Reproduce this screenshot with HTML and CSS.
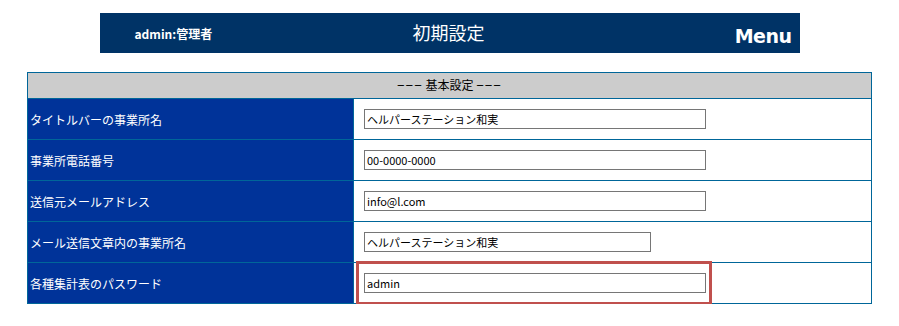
FILE: index.html
```html
<!DOCTYPE html>
<html lang="ja">
<head>
    <meta charset="UTF-8" />
    <title>初期設定</title>
    <link rel="stylesheet" href="styles.css">
</head>
<body>
    <div class="topbar">
        <span class="user">admin:管理者</span>
        <span class="title">初期設定</span>
        <span class="menu">Menu</span>
    </div>

    <table class="settings">
        <tr>
            <th colspan="2"><span class="dash">−−−</span> 基本設定 <span class="dash">−−−</span></th>
        </tr>
        <tr>
            <td class="label">タイトルバーの事業所名</td>
            <td class="field"><input type="text" class="wide" value="ヘルパーステーション和実" /></td>
        </tr>
        <tr>
            <td class="label">事業所電話番号</td>
            <td class="field"><input type="text" class="wide" value="00-0000-0000" /></td>
        </tr>
        <tr>
            <td class="label">送信元メールアドレス</td>
            <td class="field"><input type="text" class="wide" value="info@l.com" /></td>
        </tr>
        <tr>
            <td class="label">メール送信文章内の事業所名</td>
            <td class="field"><input type="text" class="mid" value="ヘルパーステーション和実" /></td>
        </tr>
        <tr>
            <td class="label">各種集計表のパスワード</td>
            <td class="field marked">
                <span class="highlight"></span>
                <input type="text" class="wide" value="admin" />
            </td>
        </tr>
    </table>
</body>
</html>
```

FILE: styles.css
```css
body {
    margin: 8px;
    font-family: "Noto Sans CJK JP", "Liberation Sans", sans-serif;
    font-size: 12px;
    background: #ffffff;
}

.topbar {
    width: 700px;
    height: 40px;
    margin: 5px auto 0;
    background-color: #003366;
    color: #ffffff;
    display: flex;
    align-items: center;
    position: relative;
}

.user {
    width: 280px;
    padding-left: 35px;
    box-sizing: border-box;
    font-weight: bold;
    font-size: 12px;
}

.title {
    flex: 1;
    text-align: left;
    padding-left: 33px;
    padding-bottom: 2px;
    font-size: 18px;
}

/* the Menu link on the right */
.menu {
    padding: 6px 8px 0 0;
    font-family: "DejaVu Sans", sans-serif;
    font-weight: bold;
    font-size: 19px;
    letter-spacing: -0.5px;
}

.settings {
    width: 845px;
    margin: 19px auto 0;
    border-collapse: collapse;
    border: 1px solid #006699;
    box-shadow: 0 1px 0 #cccccc;
}

.settings th {
    height: 25px;
    padding: 0;
    background-color: #cccccc;
    font-weight: normal;
    font-size: 12px;
    line-height: 16px;
    color: #000000;
    border: 1px solid #006699;
}

.dash {
    font-family: "Liberation Sans", sans-serif;
    font-size: 13px;
    letter-spacing: 1px;
}

.settings td {
    height: 40px;
    padding: 0;
    border: 1px solid #006699;
}

.label {
    width: 323px;
    padding-left: 2px !important;
    background-color: #003399;
    color: #ffffff;
    font-size: 12px;
}

.field {
    padding-left: 10px !important;
    background: #ffffff;
}

.field input {
    height: 20px;
    padding: 0 2px;
    box-sizing: border-box;
    border: 1px solid #767676;
    font-family: "Noto Sans CJK JP", "Liberation Sans", sans-serif;
    font-size: 11px;
    color: #000000;
    vertical-align: middle;
}

.wide {
    width: 342px;
}

.mid {
    width: 287px;
}

.marked {
    position: relative;
}

/* red annotation box around the password field */
.highlight {
    position: absolute;
    left: 2px;
    top: -2px;
    width: 350px;
    height: 38px;
    border: 3px solid #c0504d;
}
```
